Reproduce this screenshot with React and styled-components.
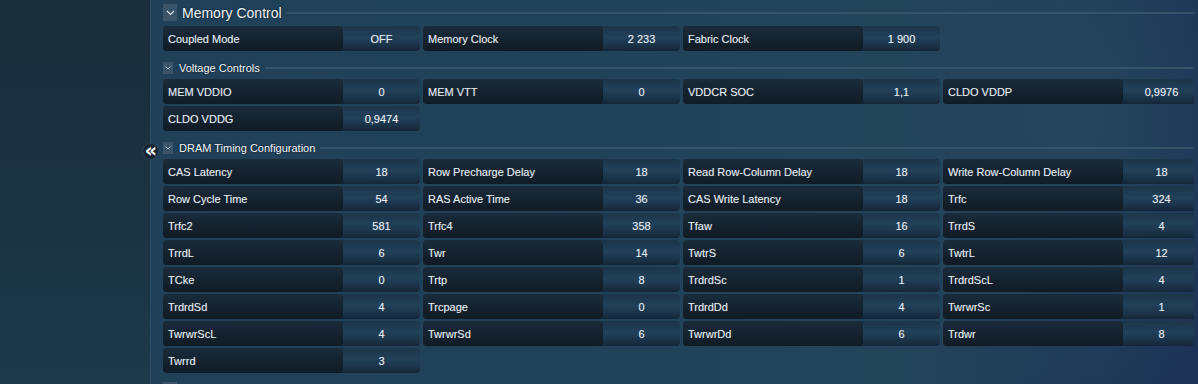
import React from 'react';
import styled, { createGlobalStyle } from 'styled-components';

const GlobalStyle = createGlobalStyle`
  html, body {
    margin: 0;
    padding: 0;
    height: 384px;
    overflow: hidden;
    background: #1e3b52;
  }
  * {
    box-sizing: border-box;
  }
`;

const sections = [
  {
    title: 'Voltage Controls',
    items: [
      ['MEM VDDIO', '0'],
      ['MEM VTT', '0'],
      ['VDDCR SOC', '1,1'],
      ['CLDO VDDP', '0,9976'],
      ['CLDO VDDG', '0,9474'],
    ],
  },
  {
    title: 'DRAM Timing Configuration',
    items: [
      ['CAS Latency', '18'],
      ['Row Precharge Delay', '18'],
      ['Read Row-Column Delay', '18'],
      ['Write Row-Column Delay', '18'],
      ['Row Cycle Time', '54'],
      ['RAS Active Time', '36'],
      ['CAS Write Latency', '18'],
      ['Trfc', '324'],
      ['Trfc2', '581'],
      ['Trfc4', '358'],
      ['Tfaw', '16'],
      ['TrrdS', '4'],
      ['TrrdL', '6'],
      ['Twr', '14'],
      ['TwtrS', '6'],
      ['TwtrL', '12'],
      ['TCke', '0'],
      ['Trtp', '8'],
      ['TrdrdSc', '1'],
      ['TrdrdScL', '4'],
      ['TrdrdSd', '4'],
      ['Trcpage', '0'],
      ['TrdrdDd', '4'],
      ['TwrwrSc', '1'],
      ['TwrwrScL', '4'],
      ['TwrwrSd', '6'],
      ['TwrwrDd', '6'],
      ['Trdwr', '8'],
      ['Twrrd', '3'],
    ],
  },
];

const memoryItems = [
  ['Coupled Mode', 'OFF'],
  ['Memory Clock', '2 233'],
  ['Fabric Clock', '1 900'],
];

const Chevron = ({ size }) => (
  <svg width={size} height={size * 0.6} viewBox="0 0 10 6" fill="none">
    <path d="M1 1 L5 5 L9 1" stroke="#e8eef3" strokeWidth="1.2" />
  </svg>
);

const SectionHeader = ({ title, main }) => (
  <Header $main={main}>
    <ChevronBox $main={main}>
      <Chevron size={main ? 9 : 6} />
    </ChevronBox>
    <HeaderTitle $main={main}>{title}</HeaderTitle>
    <HeaderLine />
  </Header>
);

const Field = ({ label, value }) => (
  <Card>
    <Label>{label}</Label>
    <Value>{value}</Value>
  </Card>
);

const App = () => {
  return (
    <>
      <GlobalStyle />
      <Page>
        <Sidebar />
        <Main>
          <SectionHeader title="Memory Control" main />
          <Grid>
            {memoryItems.map(([l, v]) => (
              <Field key={l} label={l} value={v} />
            ))}
          </Grid>
          {sections.map((s) => (
            <React.Fragment key={s.title}>
              <SectionHeader title={s.title} />
              <Grid>
                {s.items.map(([l, v]) => (
                  <Field key={l} label={l} value={v} />
                ))}
              </Grid>
            </React.Fragment>
          ))}
          {/* next collapsed section, only its top edge is in view */}
          <NextSection>
            <ChevronBox $main />
          </NextSection>
        </Main>
        <CollapseButton>«</CollapseButton>
      </Page>
    </>
  );
};

export default App;

const Page = styled.div`
  position: relative;
  display: flex;
  width: 1198px;
  height: 384px;
  overflow: hidden;
  font-family: Tahoma, 'Liberation Sans', Arial, sans-serif;
  background:
    radial-gradient(ellipse 260px 420px at 1080px 120px, rgba(42, 82, 96, 0.55), transparent 70%),
    linear-gradient(90deg, #1f4058 0%, #21435a 55%, #23455a 75%, #1f3a58 88%, #1e3357 100%);
`;

const Sidebar = styled.div`
  flex: 0 0 151px;
  height: 100%;
  background: linear-gradient(180deg, #1a2d3b 0%, #1b3342 55%, #1c3a4c 100%);
  border-right: 1px solid #2d4c60;
`;

const Main = styled.div`
  width: 1031px;
  margin-left: 12px;
  padding-top: 4px;
  overflow: hidden;
  display: flex;
  flex-direction: column;
`;

const Header = styled.div`
  display: flex;
  align-items: center;
  height: ${(p) => (p.$main ? '17px' : '12px')};
  margin-top: ${(p) => (p.$main ? '0' : '11px')};
  margin-bottom: 5px;
`;

const NextSection = styled.div`
  display: flex;
  margin-top: 9px;
`;

const ChevronBox = styled.div`
  flex: 0 0 auto;
  width: ${(p) => (p.$main ? '14px' : '10px')};
  height: ${(p) => (p.$main ? '17px' : '12px')};
  background: #3a5569;
  display: flex;
  align-items: center;
  justify-content: center;
`;

const HeaderTitle = styled.span`
  margin-left: ${(p) => (p.$main ? '5px' : '6px')};
  font-size: ${(p) => (p.$main ? '14px' : '11px')};
  color: #eef3f7;
  white-space: nowrap;
  text-shadow: 0 0 2px rgba(0, 0, 0, 0.6);
`;

const HeaderLine = styled.div`
  flex: 1;
  height: 2px;
  margin-left: 5px;
  background: #355469;
`;

const Grid = styled.div`
  display: grid;
  grid-template-columns: repeat(4, 257px);
  gap: 2px 3px;
`;

const Card = styled.div`
  display: flex;
  height: 25px;
  border-radius: 4px;
  background: linear-gradient(180deg, #1c3549 0%, #21405a 45%, #1b344a 75%, #142638 100%);
  color: #e6eef4;
  font-size: 11px;
  text-shadow: 0 0 1px rgba(230, 240, 248, 0.35);
`;

const Label = styled.div`
  flex: 0 0 180px;
  display: flex;
  align-items: center;
  padding-left: 5px;
  border-radius: 4px;
  background: linear-gradient(180deg, #1a2b39 0%, #152330 50%, #101b25 100%);
  white-space: nowrap;
  color: #e3ebf1;
`;

const Value = styled.div`
  flex: 1;
  display: flex;
  align-items: center;
  justify-content: center;
  white-space: nowrap;
`;

const CollapseButton = styled.div`
  position: absolute;
  left: 142px;
  top: 143px;
  width: 17px;
  height: 17px;
  border-radius: 50%;
  background: #172532;
  border: 1px solid #2c4356;
  color: #f2f6f9;
  font-family: 'DejaVu Sans', sans-serif;
  font-size: 19px;
  font-weight: bold;
  line-height: 13px;
  text-align: center;
  letter-spacing: -1px;
`;
